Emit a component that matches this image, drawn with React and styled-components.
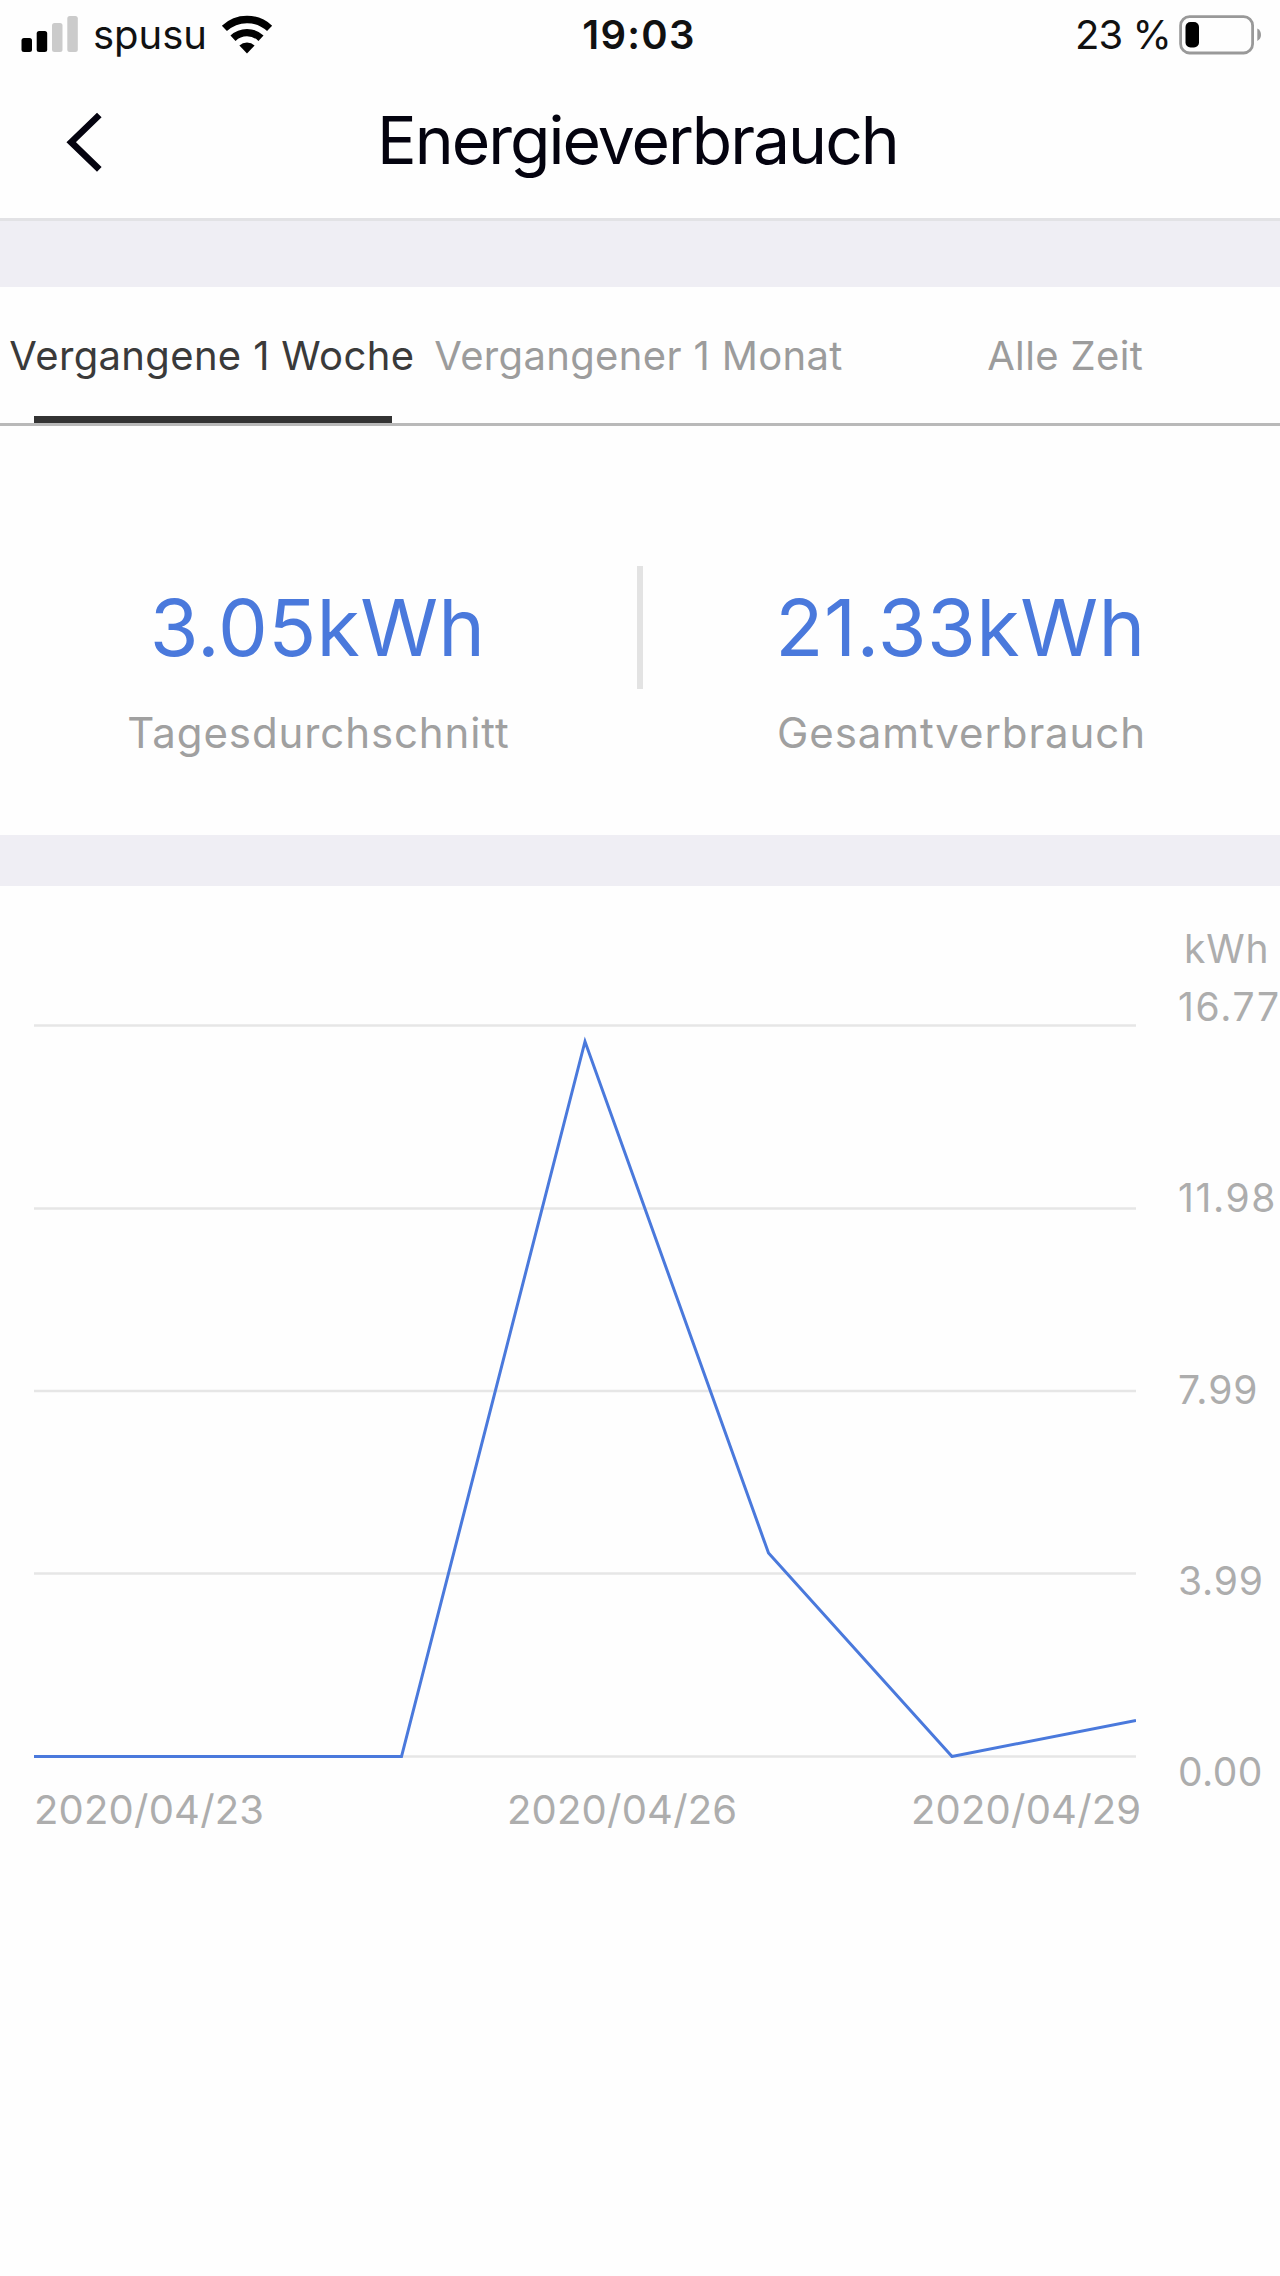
import styled, { createGlobalStyle } from "styled-components";

const tabs = [
  { label: "Vergangene 1 Woche", active: true },
  { label: "Vergangener 1 Monat" },
  { label: "Alle Zeit" },
];

const stats = [
  { value: "3.05kWh", label: "Tagesdurchschnitt", spacing: 0.3, pull: 5 },
  { value: "21.33kWh", label: "Gesamtverbrauch", spacing: 0.5, pull: -1 },
];

const axisValues = [
  { value: "16.77", spacing: 1.7 },
  { value: "11.98", spacing: 1.6 },
  { value: "7.99", spacing: 1 },
  { value: "3.99", spacing: 0.8 },
  { value: "0.00", spacing: 0.4 },
];
const gridLines = [1.5, 184.5, 367, 549.5, 732.5];
const points = [
  [0, 732.5],
  [184, 732.5],
  [367.5, 732.5],
  [551, 17.5],
  [734.5, 529],
  [918, 732.5],
  [1102, 696.5],
];

const SignalIcon = () => (
  <svg width='58' height='38' viewBox='0 0 58 38'>
    <rect x='0.5' y='22' width='10.5' height='14' rx='2.5' fill='#000' />
    <rect x='15.7' y='15' width='10.5' height='21' rx='2.5' fill='#000' />
    <rect x='31' y='7' width='10.5' height='29' rx='2.5' fill='#cbcbcb' />
    <rect x='46.3' y='0' width='10.5' height='36' rx='2.5' fill='#cbcbcb' />
  </svg>
);

const WifiIcon = () => (
  <svg width='52' height='40' viewBox='0 0 52 40'>
    <g fill='none' stroke='#000' strokeWidth='7.4'>
      <path d='M3.4 13.4 A33 33 0 0 1 48.6 13.4' />
      <path d='M12 23.2 A20.4 20.4 0 0 1 40 23.2' />
    </g>
    <path d='M26 38.4 L18.4 30.6 A11 11 0 0 1 33.6 30.6 Z' fill='#000' />
  </svg>
);

const BatteryIcon = () => (
  <svg width='84' height='40' viewBox='0 0 84 40'>
    <rect
      x='1.6'
      y='1.6'
      width='72'
      height='36.4'
      rx='9'
      fill='none'
      stroke='#999'
      strokeWidth='2.8'
    />
    <rect x='6.5' y='7' width='13.5' height='25.5' rx='5' fill='#000' />
    <path d='M78.3 13.6 Q82 15.5 82 19.8 Q82 24 78.3 26 Z' fill='#999' />
  </svg>
);

const App = () => {
  return (
    <>
      <GlobalStyle />
      <Screen>
        <StatusBar>
          <Carrier>
            <SignalIcon />
            <StatusText>spusu</StatusText>
            <WifiIcon />
          </Carrier>
          <Clock>19:03</Clock>
          <Battery>
            <StatusText $spacing={-0.9}>23 %</StatusText>
            <BatteryIcon />
          </Battery>
        </StatusBar>

        <NavBar>
          <BackButton aria-label='Zurück'>
            <svg width='40' height='60' viewBox='0 0 40 60'>
              <path
                d='M33.3 3 L5.2 30.2 L33.3 57.4'
                fill='none'
                stroke='#04030f'
                strokeWidth='6.6'
              />
            </svg>
          </BackButton>
          <Title>Energieverbrauch</Title>
        </NavBar>

        <Band $height={69} $border />

        <Tabs>
          {tabs.map(({ label, active }) => (
            <Tab key={label} $active={active}>
              <span>{label}</span>
            </Tab>
          ))}
        </Tabs>

        <Stats>
          {stats.map(({ value, label, spacing, pull }) => (
            <Stat key={label} $pull={pull}>
              <StatValue $spacing={spacing}>{value}</StatValue>
              <StatLabel>{label}</StatLabel>
            </Stat>
          ))}
        </Stats>

        <Band $height={51} />

        <Chart>
          <Plot>
            <svg width='1102' height='734' viewBox='0 0 1102 734'>
              {gridLines.map((y) => (
                <path key={y} d={`M0 ${y} H1102`} stroke='#e6e6e6' strokeWidth='2.6' />
              ))}
              <polyline
                points={points.map((p) => p.join(",")).join(" ")}
                fill='none'
                stroke='#4a79dc'
                strokeWidth='3'
              />
            </svg>
            <Dates>
              <span>2020/04/23</span>
              <span>2020/04/26</span>
              <span>2020/04/29</span>
            </Dates>
          </Plot>
          <Axis>
            <Unit>kWh</Unit>
            <AxisValues>
              {axisValues.map(({ value, spacing }) => (
                <AxisValue key={value} $spacing={spacing}>
                  {value}
                </AxisValue>
              ))}
            </AxisValues>
          </Axis>
        </Chart>
      </Screen>
    </>
  );
};

export default App;

const GlobalStyle = createGlobalStyle`
  * {
    box-sizing: border-box;
  }
  body {
    margin: 0;
    background: #fefefe;
    font-family: Inter, "Liberation Sans", sans-serif;
    overflow-x: hidden;
  }
  svg {
    display: block;
    flex: none;
  }
`;

const Screen = styled.main`
  width: 1280px;
  height: 2276px;
  background: #fefefe;
  overflow: hidden;
`;

const StatusBar = styled.div`
  height: 69px;
  display: grid;
  grid-template-columns: 1fr auto 1fr;
  align-items: center;
`;

const StatusText = styled.span`
  font-size: 40px;
  line-height: 69px;
  letter-spacing: ${({ $spacing }) => $spacing || 0}px;
  color: #111;
  white-space: nowrap;
`;

const Clock = styled(StatusText)`
  font-weight: 600;
  letter-spacing: 1.3px;
  padding-right: 2px;
`;

const Carrier = styled.div`
  display: flex;
  align-items: center;
  padding-left: 21px;
  gap: 14px;
`;

const Battery = styled.div`
  display: flex;
  align-items: center;
  justify-content: flex-end;
  gap: 8px;
  padding-right: 17px;
`;

const NavBar = styled.header`
  height: 149px;
  display: grid;
  grid-template-columns: 1fr auto 1fr;
  align-items: center;
  padding-bottom: 8px;
`;

const BackButton = styled.button`
  justify-self: start;
  margin: 4px 0 0 66px;
  padding: 0;
  border: none;
  background: none;
`;

const Title = styled.h1`
  grid-column: 2;
  margin: 0;
  padding-right: 5px;
  font-size: 66px;
  line-height: 80px;
  font-weight: 400;
  color: #04030f;
  letter-spacing: -2px;
`;

const Band = styled.div`
  height: ${({ $height }) => $height}px;
  background: #efeef4;
  border-top: ${({ $border }) => ($border ? "3px solid #e2e2e5" : "none")};
`;

const Tabs = styled.nav`
  height: 139px;
  display: grid;
  grid-template-columns: repeat(3, 1fr);
  border-bottom: 3px solid #b9b9b9;
`;

const Tab = styled.div`
  display: flex;
  flex-direction: column;
  align-items: center;
  justify-content: space-between;
  font-size: 40px;
  line-height: 137px;
  white-space: nowrap;
  letter-spacing: 0.35px;
  color: ${({ $active }) => ($active ? "#3a3a3a" : "#9c9c9c")};
  span {
    height: 129px;
    padding-right: 3px;
  }
  &::after {
    content: "";
    width: 358px;
    height: 7px;
    background: ${({ $active }) => ($active ? "#333" : "transparent")};
  }
`;

const Stats = styled.section`
  height: 409px;
  display: grid;
  grid-template-columns: 1fr 1fr;
  padding-top: 140px;
  background: linear-gradient(#e3e3e3, #e3e3e3) 637px 140px / 6px 123px no-repeat;
`;

const Stat = styled.div`
  display: flex;
  flex-direction: column;
  align-items: center;
  padding-right: ${({ $pull }) => Math.max($pull, 0)}px;
  padding-left: ${({ $pull }) => Math.max(-$pull, 0)}px;
`;

const StatValue = styled.strong`
  font-size: 79px;
  line-height: 123px;
  font-weight: 400;
  color: #4a79dc;
  letter-spacing: ${({ $spacing }) => $spacing}px;
`;

const StatLabel = styled.span`
  margin-top: 17px;
  padding-left: 2px;
  font-size: 42px;
  line-height: 54px;
  color: #a0a0a0;
  letter-spacing: 0.9px;
`;

const Chart = styled.section`
  display: grid;
  grid-template-columns: 1102px 1fr;
  padding-left: 34px;
  font-size: 40px;
  line-height: 48px;
  color: #adadad;
`;

const Plot = styled.div`
  padding-top: 138px;
`;

const Dates = styled.div`
  display: grid;
  grid-template-columns: 473px 404px auto;
  margin-top: 28px;
  letter-spacing: 0.2px;
  white-space: nowrap;
`;

const Axis = styled.div`
  padding: 39px 0 0 42px;
  font-size: 39px;
`;

const Unit = styled.div`
  padding-left: 6px;
  letter-spacing: 0.8px;
`;

const AxisValues = styled.div`
  height: 813px;
  margin-top: 10px;
  display: flex;
  flex-direction: column;
  justify-content: space-between;
`;

const AxisValue = styled.span`
  letter-spacing: ${({ $spacing }) => $spacing}px;
`;
